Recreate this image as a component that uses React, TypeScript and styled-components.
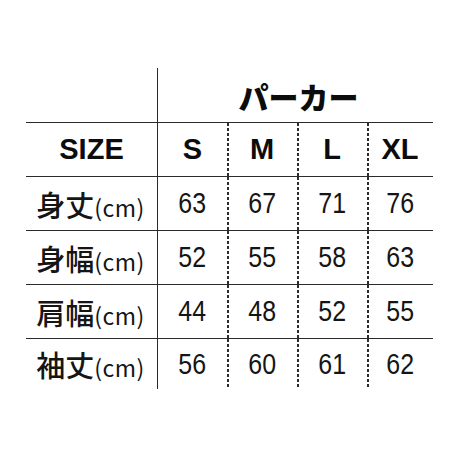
import React from 'react';
import styled, { createGlobalStyle } from 'styled-components';

const GlobalStyle = createGlobalStyle`
  html, body {
    margin: 0;
    padding: 0;
    background: #ffffff;
  }
  body {
    width: 460px;
    height: 460px;
    overflow: hidden;
    font-family: 'Liberation Sans', Arial, 'Noto Sans CJK JP', sans-serif;
    color: #111;
  }
`;

const LINE = '#2b2b2b';

const Page = styled.div`
  padding: 68px 0 0 26px;
`;

const Table = styled.div`
  display: grid;
  grid-template-columns: 132px 69px 70px 70px 66px;
  grid-template-rows: 55px 54px 54px 54px 54px 50px;
  width: 407px;
`;

const Cell = styled.div<{ $bottom?: boolean; $solidRight?: boolean; $dashed?: boolean }>`
  display: flex;
  align-items: center;
  justify-content: center;
  border-bottom: ${({ $bottom }) => ($bottom ? `1.5px solid ${LINE}` : 'none')};
  border-right: ${({ $solidRight }) => ($solidRight ? `1.5px solid ${LINE}` : 'none')};
  background-image: ${({ $dashed }) =>
    $dashed
      ? `repeating-linear-gradient(to bottom, ${LINE} 0 3px, transparent 3px 5px)`
      : 'none'};
  background-size: 2px 100%;
  background-repeat: no-repeat;
  background-position: left top;
`;

const Title = styled.div`
  grid-column: 2 / span 4;
  display: flex;
  align-items: center;
  justify-content: center;
  padding: 2px 0 0 6px;
  border-bottom: 1.5px solid ${LINE};
  font-family: 'Noto Sans CJK JP', sans-serif;
  font-weight: 900;
  font-size: 30px;
  color: #0c0c0c;
`;

const HeadText = styled.span`
  font-family: 'Liberation Sans', Arial, sans-serif;
  font-weight: 700;
  font-size: 29px;
  color: #0c0c0c;
`;

const Label = styled.span`
  font-family: 'Noto Sans CJK JP', sans-serif;
  font-weight: 500;
  font-size: 29px;
  color: #151515;
  white-space: nowrap;
  display: flex;
  align-items: baseline;
  margin-left: -2px;
`;

const Unit = styled.span`
  font-family: 'Noto Sans CJK JP', sans-serif;
  font-weight: 400;
  font-size: 23px;
  letter-spacing: 0.5px;
`;

const Num = styled.span`
  display: inline-block;
  font-family: 'Liberation Sans Narrow', 'Liberation Sans', Arial, sans-serif;
  font-size: 29px;
  color: #151515;
  transform: scaleX(0.86);
`;

const sizes = ['S', 'M', 'L', 'XL'];

const rows = [
  { label: '身丈', values: [63, 67, 71, 76] },
  { label: '身幅', values: [52, 55, 58, 63] },
  { label: '肩幅', values: [44, 48, 52, 55] },
  { label: '袖丈', values: [56, 60, 61, 62] },
];

export default function App() {
  return (
    <Page>
      <GlobalStyle />
      <Table>
        <Cell $bottom $solidRight />
        <Title>パーカー</Title>

        <Cell $bottom $solidRight>
          <HeadText>SIZE</HeadText>
        </Cell>
        {sizes.map((s, i) => (
          <Cell key={s} $bottom $dashed={i > 0}>
            <HeadText>{s}</HeadText>
          </Cell>
        ))}

        {rows.map((row, r) => {
          const last = r === rows.length - 1;
          return (
            <React.Fragment key={row.label}>
              <Cell $bottom={!last} $solidRight>
                <Label>
                  {row.label}
                  <Unit>(cm)</Unit>
                </Label>
              </Cell>
              {row.values.map((v, i) => (
                <Cell key={i} $bottom={!last} $dashed={i > 0}>
                  <Num>{v}</Num>
                </Cell>
              ))}
            </React.Fragment>
          );
        })}
      </Table>
    </Page>
  );
}
